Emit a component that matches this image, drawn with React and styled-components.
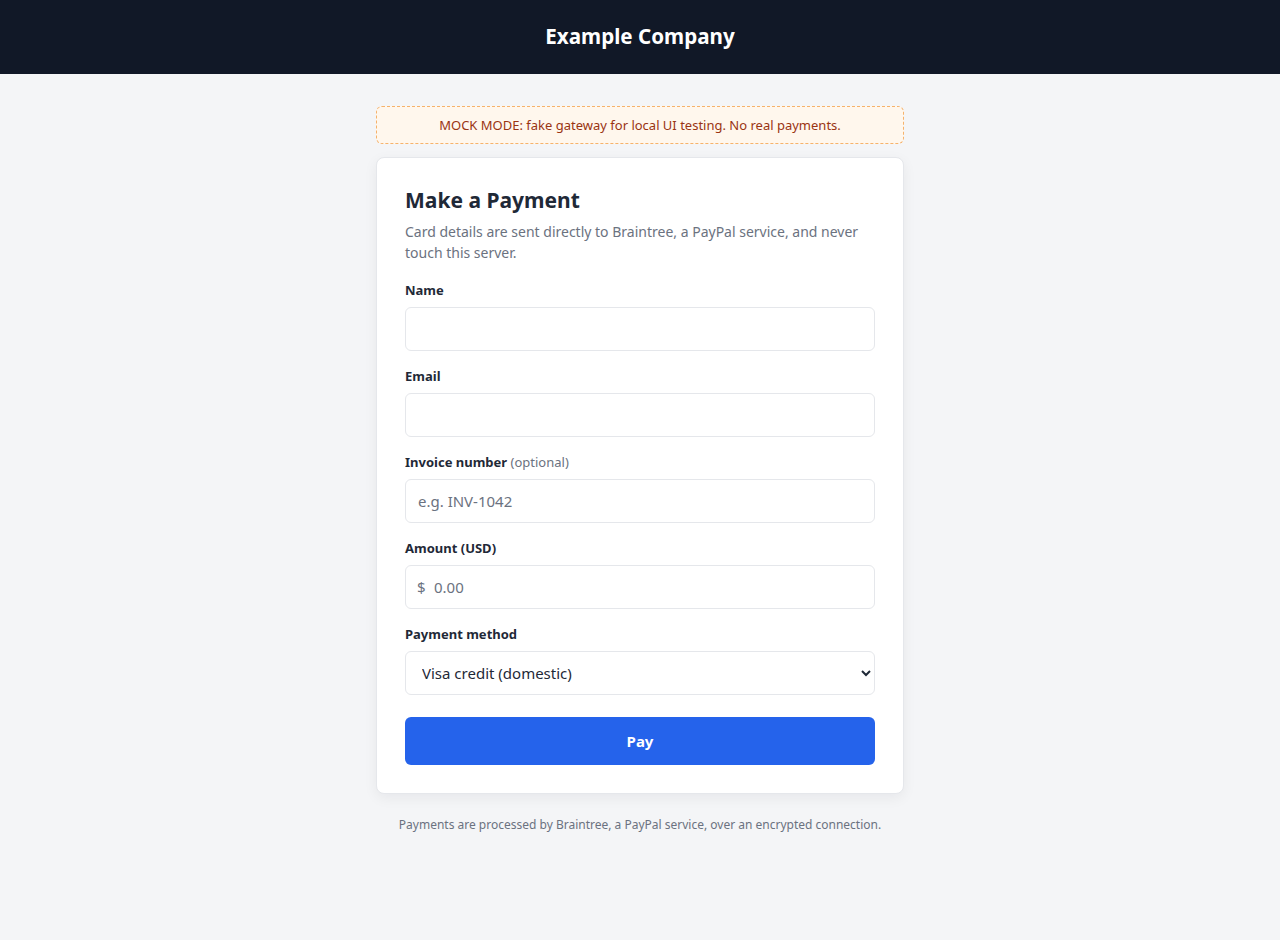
import React from 'react';
import styled, { createGlobalStyle } from 'styled-components';

const GlobalStyle = createGlobalStyle`
  * { box-sizing: border-box; }
  body {
    margin: 0;
    background: #f4f5f7;
    font-family: "Noto Sans", "Open Sans", sans-serif;
    color: #1f2937;
  }
`;

const Header = styled.header`
  height: 74px;
  padding-bottom: 2px;
  background: #111827;
  display: flex;
  align-items: center;
  justify-content: center;
`;

const Brand = styled.h1`
  margin: 0;
  color: #ffffff;
  font-size: 20.6px;
  font-weight: 700;
`;

const Main = styled.main`
  width: 528px;
  margin: 32px auto 0;
  display: flex;
  flex-direction: column;
`;

const MockBanner = styled.div`
  height: 38px;
  display: flex;
  align-items: center;
  justify-content: center;
  background: #fff7ed;
  border: 1px dashed #f6b26b;
  border-radius: 6px;
  color: #9a3412;
  font-size: 13px;
  margin-bottom: 13px;
`;

const Card = styled.form`
  background: #ffffff;
  border: 1px solid #e5e7eb;
  border-radius: 8px;
  box-shadow: 0 4px 14px rgba(17, 24, 39, 0.06);
  padding: 26px 28px 28px;
  display: flex;
  flex-direction: column;
`;

const Title = styled.h2`
  margin: 0 0 5px;
  font-size: 21px;
  line-height: 32px;
  font-weight: 700;
  color: #1f2937;
`;

const Intro = styled.p`
  margin: 0 0 18px;
  font-size: 14px;
  line-height: 21px;
  color: #6b7280;
`;

const Field = styled.div`
  display: flex;
  flex-direction: column;
  gap: 8px;
  margin-bottom: ${({ $last }) => ($last ? '22px' : '16px')};
`;

const Label = styled.label`
  font-size: 13px;
  line-height: 18px;
  font-weight: 700;
  color: #1f2937;
`;

const Optional = styled.span`
  font-weight: 400;
  color: #6b7280;
`;

const Input = styled.input`
  height: 44px;
  width: 100%;
  border: 1px solid #e5e7eb;
  border-radius: 6px;
  padding: ${({ $prefixed }) => ($prefixed ? '0 12px 0 28px' : '0 12px')};
  font-family: inherit;
  font-size: 15px;
  color: #1f2937;
  background: #ffffff;
  outline: none;
  &::placeholder { color: #6b7280; }
`;

const PrefixWrap = styled.div`
  position: relative;
`;

const Prefix = styled.span`
  position: absolute;
  left: 12px;
  top: 50%;
  transform: translateY(-50%);
  font-size: 15px;
  color: #6b7280;
`;

const Select = styled.select`
  height: 44px;
  width: 100%;
  border: 1px solid #e5e7eb;
  border-radius: 6px;
  padding: 0 8px 0 12px;
  font-family: inherit;
  font-size: 15px;
  color: #1f2937;
  background: #ffffff;
  outline: none;
`;

const PayButton = styled.button`
  height: 48px;
  border: none;
  border-radius: 6px;
  background: #2563eb;
  color: #ffffff;
  font-family: inherit;
  font-size: 15px;
  font-weight: 700;
  cursor: pointer;
`;

const Footnote = styled.p`
  margin: 22px 0 0;
  text-align: center;
  font-size: 12px;
  line-height: 18px;
  color: #6b7280;
`;

export default function App() {
  return (
    <>
      <GlobalStyle />
      <Header>
        <Brand>Example Company</Brand>
      </Header>
      <Main>
        <MockBanner>MOCK MODE: fake gateway for local UI testing. No real payments.</MockBanner>
        <Card onSubmit={(e) => e.preventDefault()}>
          <Title>Make a Payment</Title>
          <Intro>
            Card details are sent directly to Braintree, a PayPal service, and never touch this server.
          </Intro>
          <Field>
            <Label htmlFor="name">Name</Label>
            <Input id="name" type="text" />
          </Field>
          <Field>
            <Label htmlFor="email">Email</Label>
            <Input id="email" type="email" />
          </Field>
          <Field>
            <Label htmlFor="invoice">
              Invoice number <Optional>(optional)</Optional>
            </Label>
            <Input id="invoice" type="text" placeholder="e.g. INV-1042" />
          </Field>
          <Field>
            <Label htmlFor="amount">Amount (USD)</Label>
            <PrefixWrap>
              <Prefix>$</Prefix>
              <Input id="amount" type="text" placeholder="0.00" $prefixed />
            </PrefixWrap>
          </Field>
          <Field $last>
            <Label htmlFor="method">Payment method</Label>
            <Select id="method" defaultValue="visa-domestic">
              <option value="visa-domestic">Visa credit (domestic)</option>
              <option value="visa-intl">Visa credit (international)</option>
              <option value="mastercard">Mastercard</option>
            </Select>
          </Field>
          <PayButton type="submit">Pay</PayButton>
        </Card>
        <Footnote>Payments are processed by Braintree, a PayPal service, over an encrypted connection.</Footnote>
      </Main>
    </>
  );
}
